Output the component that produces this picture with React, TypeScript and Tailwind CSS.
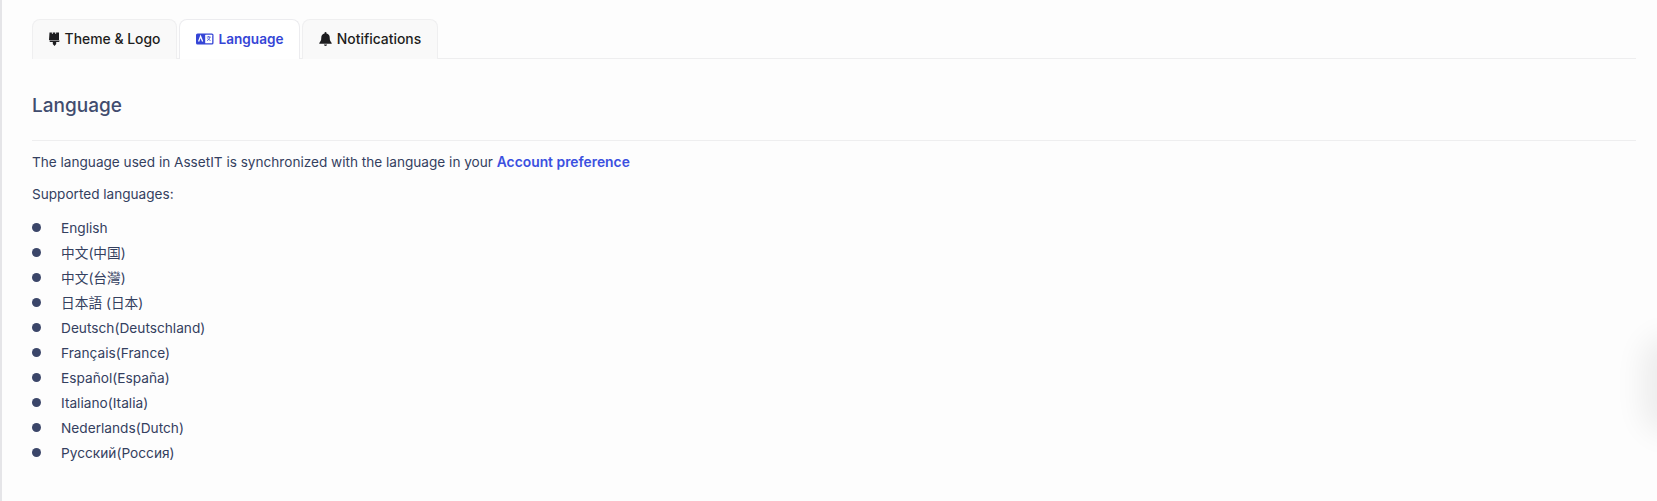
import React from "react";

const languages = [
  "English",
  "中文(中国)",
  "中文(台灣)",
  "日本語 (日本)",
  "Deutsch(Deutschland)",
  "Français(France)",
  "Español(España)",
  "Italiano(Italia)",
  "Nederlands(Dutch)",
  "Русский(Россия)",
];

function BrushIcon() {
  return (
    <svg width="11" height="14" viewBox="0 0 11 14" fill="currentColor">
      <path d="M0.5 0.5h2.400v1.400h.8V0.500h2.600v1.400h.8V0.500h2.900v7.400h-10z" />
      <path d="M0.5 8.500h10v.5a1 1 0 0 1-1 1H7.200v1.900l-1.700 2-1.700-2V10H1.500a1 1 0 0 1-1-1z" />
    </svg>
  );
}

function LanguageIcon() {
  return (
    <svg width="18" height="12" viewBox="0 0 18 12">
      <rect x="0" y="0.5" width="17.5" height="11" rx="1.6" fill="currentColor" />
      <rect x="9.2" y="1.8" width="7" height="8.4" rx="0.5" fill="#ffffff" />
      <path d="M2.6 8.6 4.6 3.3 6.6 8.6" fill="none" stroke="#ffffff" strokeWidth="1.3" />
      <path d="M10.8 4h3.800M12.700 3v1M14 4c-.4 1.800-1.600 3-3 3.600M11.600 5.200c.5 1 1.500 1.800 2.900 2.300" fill="none" stroke="currentColor" strokeWidth="0.8" />
    </svg>
  );
}

function BellIcon() {
  return (
    <svg width="13" height="14" viewBox="0 0 13 14" fill="currentColor">
      <path d="M6.500 0a1 1 0 0 1 1 1v.5A4.200 4.200 0 0 1 10.700 5.600c0 3.400 1.100 4.400 2 5.400.2.300 0 .8-.5.8H.8c-.5 0-.7-.5-.5-.8.9-1 2-2 2-5.400A4.200 4.200 0 0 1 5.500 1.500V1a1 1 0 0 1 1-1z" />
      <path d="M4.900 12.500h3.200a1.600 1.500 0 0 1-3.200 0z" />
    </svg>
  );
}

export default function App() {
  return (
    <div
      className="relative h-[501px] w-full overflow-hidden border-l-2 border-[#e5e5e8] bg-[#fdfdfd] pl-[30px] pr-[21px] pt-[19px] text-[#34405f]"
      style={{ fontFamily: "Inter, 'Noto Sans CJK SC', sans-serif" }}
    >
      <div className="flex h-[40px] items-stretch gap-[2px] border-b border-[#eeeeef] text-[13.9px] font-medium text-[#1d1d20]">
        <div className="-mb-px flex w-[145px] items-center justify-center gap-[5px] rounded-t-[8px] border border-b-0 border-[#efeff0] bg-[#f9f9f9] pb-px">
          <BrushIcon />
          <span>Theme &amp; Logo</span>
        </div>
        <div className="-mb-px flex w-[121px] items-center justify-center gap-[5px] rounded-t-[8px] border border-b-0 border-[#ececef] bg-white pb-px text-[13.6px] font-semibold text-[#3545d6]">
          <LanguageIcon />
          <span>Language</span>
        </div>
        <div className="-mb-px flex w-[136px] items-center justify-center gap-[5px] rounded-t-[8px] border border-b-0 border-[#efeff0] bg-[#f9f9f9] pb-px">
          <BellIcon />
          <span>Notifications</span>
        </div>
      </div>

      <h2 className="mt-[34px] h-[47px] text-[19px] leading-[26px] font-medium text-[#414c6e]">Language</h2>
      <div className="border-t border-[#eeeeef] pt-[11px] text-[13.6px] leading-[20px]">
        <p>
          The language used in AssetIT is synchronized with the language in your{" "}
          <a className="text-[13.85px] font-semibold text-[#3b50e0]">Account preference</a>
        </p>
        <p className="mt-[12px]">Supported languages:</p>
        <ul className="mt-[11px] flex flex-col text-[13.7px]">
          {languages.map((lang) => (
            <li key={lang} className="flex h-[25px] items-center gap-[20px]">
              <span className="h-[9px] w-[9px] shrink-0 rounded-full bg-[#3b4669]" />
              <span>{lang}</span>
            </li>
          ))}
        </ul>
      </div>

      <div className="absolute right-[-24px] top-[350px] h-[70px] w-[24px] rounded-full shadow-[0_0_30px_14px_rgba(0,0,0,0.07)]" />
    </div>
  );
}
